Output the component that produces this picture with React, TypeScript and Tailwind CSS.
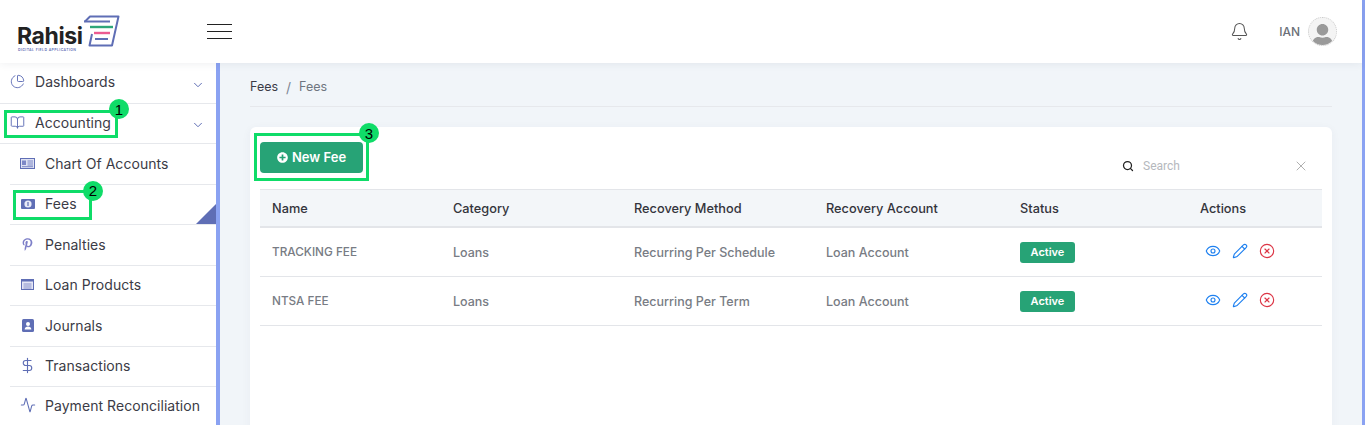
import React from 'react';
import {
  Activity,
  Bell,
  BookOpen,
  ChevronDown,
  DollarSign,
  Eye,
  PieChart,
  Pencil,
  Search,
  X,
  XCircle,
} from 'lucide-react';
import { FaPinterestP, FaPlusCircle, FaUser } from 'react-icons/fa';

const NewsIcon = () => (
  <svg width="15" height="11" viewBox="0 0 15 11" className="text-[#5f6eb5]">
    <rect x="0.5" y="0.5" width="14" height="10" fill="#dfe2f3" stroke="currentColor" />
    <rect x="2" y="2.5" width="4" height="4.5" fill="#7d88c6" />
    <path d="M7.5 3h5.5M7.5 5h5.5M7.5 7h5.5M2 8.7h11" stroke="#7d88c6" />
  </svg>
);

const MoneyIcon = () => (
  <svg width="14" height="10" viewBox="0 0 14 10" className="text-[#5f6eb5]">
    <rect width="14" height="10" rx="1" fill="currentColor" />
    <ellipse cx="7" cy="5" rx="3.6" ry="3.6" fill="#e8ebf7" />
    <rect x="6.4" y="3" width="1.2" height="4" fill="currentColor" />
  </svg>
);

const ListIcon = () => (
  <svg width="13" height="11" viewBox="0 0 13 11" className="text-[#5f6eb5]">
    <rect x="0.5" y="0.5" width="12" height="10" fill="#e4e6f5" stroke="currentColor" />
    <rect width="13" height="2.5" fill="currentColor" />
    <path d="M2.5 5h8M2.5 7h8M2.5 9h8" stroke="#7d88c6" strokeWidth="0.9" />
  </svg>
);

const ContactIcon = () => (
  <svg width="12" height="13" viewBox="0 0 12 13" className="text-[#5f6eb5]">
    <rect width="12" height="13" rx="1.5" fill="currentColor" />
    <circle cx="6" cy="5" r="2" fill="#fff" />
    <path d="M2.6 10.4c.3-2 1.7-2.9 3.4-2.9s3.1.9 3.4 2.9z" fill="#fff" />
  </svg>
);

const Logo = () => (
  <div className="relative h-[36px] w-[104px]">
    <span className="absolute left-0 top-[9px] text-[23px] font-bold leading-[26px] tracking-[-0.4px] text-[#222]">Rahisi</span>
    <span className="absolute left-[1px] top-[34px] whitespace-nowrap text-[3.5px] font-semibold leading-[4px] tracking-[0.4px] text-[#5f6eb5]">DIGITAL FIELD APPLICATION</span>
    <svg width="38" height="34" viewBox="0 0 38 34" className="absolute left-[66px] top-0" fill="none">
      <path d="M2 7.5 7 2.5H35.5L29 31.5H6.5L9 20" stroke="#5f6eb5" strokeWidth="2" strokeLinejoin="round" />
      <path d="M1 7.5H27" stroke="#5f6eb5" strokeWidth="2" />
      <path d="M7 13H30" stroke="#2ea67a" strokeWidth="2.4" />
      <path d="M11 19H27" stroke="#ec5b92" strokeWidth="2.4" />
      <path d="M12 25H25" stroke="#5f6eb5" strokeWidth="2" />
    </svg>
  </div>
);

const subItems = [
  { label: 'Chart Of Accounts', icon: <NewsIcon /> },
  { label: 'Fees', icon: <MoneyIcon /> },
  { label: 'Penalties', icon: <FaPinterestP size={13} className="text-[#7d7fc8]" /> },
  { label: 'Loan Products', icon: <ListIcon /> },
  { label: 'Journals', icon: <ContactIcon /> },
  { label: 'Transactions', icon: <DollarSign size={17} strokeWidth={1.6} className="text-[#5f6eb5]" /> },
  { label: 'Payment Reconciliation', icon: <Activity size={16} strokeWidth={1.6} className="text-[#5f6eb5]" /> },
];

const fees = [
  { name: 'TRACKING FEE', method: 'Recurring Per Schedule' },
  { name: 'NTSA FEE', method: 'Recurring Per Term' },
];

const grid = 'grid grid-cols-[181px_181px_192px_194px_180px_1fr] pl-3';

const Badge = ({ n, className }: { n: number; className: string }) => (
  <span className={`absolute flex h-5 w-5 items-center justify-center rounded-full bg-[#0fdc68] font-['Liberation_Sans',sans-serif] text-[15px] leading-none text-black ${className}`}>
    {n}
  </span>
);

export default function App() {
  return (
    <div className="flex h-[425px] overflow-hidden bg-[#f1f5f9] font-['Inter',sans-serif] text-[#3a3a4a]">
      <div className="flex min-w-0 flex-1 flex-col">
        <header className="z-10 flex h-[63px] shrink-0 items-center justify-between bg-white pl-[17px] pr-[25px] shadow-[0_1px_8px_rgba(50,60,90,0.08)]">
          <div className="flex items-center">
            <div>
              <Logo />
            </div>
            <div className="ml-[86px] flex w-[25px] flex-col gap-[6px]">
              <span className="h-px bg-[#222]" />
              <span className="h-px bg-[#222]" />
              <span className="h-px bg-[#222]" />
            </div>
          </div>
          <div className="flex items-center">
            <Bell size={19} strokeWidth={1.3} className="text-[#555]" />
            <span className="ml-[30px] text-[12px] font-medium text-[#6b6f78]">IAN</span>
            <span className="ml-2 flex h-[29px] w-[29px] items-end justify-center overflow-hidden rounded-full border border-dotted border-[#ccc] bg-[#f4f4f4]">
              <FaUser size={23} className="translate-y-[2px] text-[#9a9a9a]" />
            </span>
          </div>
        </header>

        <div className="flex min-h-0 flex-1">
          <aside className="w-[220px] shrink-0 border-r-4 border-[#8aa2f2] bg-white text-[14px] tracking-[0.05px] text-[#3b3b46]">
            <div className="flex h-[41px] items-center border-b border-[#e6e8ec] pb-[3px] pl-[10px] pr-[11px]">
              <PieChart size={15} strokeWidth={1.5} className="text-[#5f6eb5]" />
              <span className="ml-[10px] flex-1">Dashboards</span>
              <ChevronDown size={14} strokeWidth={1.7} className="mt-[6px] text-[#5f6eb5]" />
            </div>
            <div className="relative flex h-[40px] items-center border-b border-[#e6e8ec] pb-[2px] pl-[10px] pr-[11px]">
              <BookOpen size={15} strokeWidth={1.5} className="text-[#5f6eb5]" />
              <span className="ml-[10px] flex-1">Accounting</span>
              <ChevronDown size={14} strokeWidth={1.7} className="mt-[5px] text-[#5f6eb5]" />
              <span className="absolute left-[4px] top-[6px] h-[28px] w-[114px] border-[3px] border-[#0fdc68]" />
              <Badge n={1} className="left-[109px] top-[-5px]" />
            </div>
            <ul className="ml-[10px]">
              {subItems.map((item) => (
                <li key={item.label} className="relative flex h-[40.5px] items-center border-b border-[#e6e8ec] pb-[1px] last:border-b-0 last:pb-[4px]">
                  <span className="flex w-[35px] justify-center pr-[5px] pl-[5px]">{item.icon}</span>
                  <span className="whitespace-nowrap">{item.label}</span>
                  {item.label === 'Fees' && (
                    <>
                      <span className="absolute bottom-0 right-0 h-0 w-0 border-b-[20px] border-l-[20px] border-b-[#5f6eb5] border-l-transparent" />
                      <span className="absolute left-[3px] top-[5px] h-[30px] w-[79px] border-[3px] border-[#0fdc68]" />
                      <Badge n={2} className="left-[73px] top-[-4px]" />
                    </>
                  )}
                </li>
              ))}
            </ul>
          </aside>

          <main className="min-w-0 flex-1 px-[30px]">
            <nav className="flex h-[44px] items-center border-b border-[#e6e8ec] pt-[5px] text-[12.5px]">
              <span className="text-[#3b3b46]">Fees</span>
              <span className="mx-[8px] text-[14px] text-[#7d8796]">/</span>
              <span className="text-[#6f7680]">Fees</span>
            </nav>
            <section className="mt-[20px] rounded-t-md bg-white px-[10px] pt-[15px] shadow-[0_2px_10px_rgba(50,60,90,0.05)]">
              <div className="flex h-[47px] items-start justify-between">
                <div className="relative">
                  <button className="flex h-[31px] w-[103px] items-center justify-center gap-1 rounded-[4px] bg-[#27a376] text-[13px] font-semibold text-white">
                    <FaPlusCircle size={11} />
                    New Fee
                  </button>
                  <span className="absolute left-[-6px] top-[-9px] h-[48px] w-[115px] border-[3px] border-[#0fdc68]" />
                  <Badge n={3} className="left-[99px] top-[-19px]" />
                </div>
                <div className="mr-[13px] mt-[15px] flex w-[187px] items-center text-[12px]">
                  <Search size={12} strokeWidth={2.5} className="text-[#222]" />
                  <span className="ml-[9px] flex-1 font-['Roboto',sans-serif] text-[#b5b8bd]">Search</span>
                  <X size={16} strokeWidth={1} className="text-[#888]" />
                </div>
              </div>

              <div className={`${grid} h-[39px] items-center border-y-2 border-y-[#e3e5e9] border-t-[1px] bg-[#f3f6f9] pt-[2px] text-[12.75px] font-medium text-[#33343c]`}>
                <span>Name</span>
                <span>Category</span>
                <span>Recovery Method</span>
                <span>Recovery Account</span>
                <span>Status</span>
                <span>Actions</span>
              </div>
              {fees.map((fee) => (
                <div key={fee.name} className={`${grid} h-[49px] items-center border-b border-[#e3e5e9] text-[12.5px] font-medium text-[#787c84]`}>
                  <span className="pt-[2px] text-[11.75px]">{fee.name}</span>
                  <span className="pt-[2px]">Loans</span>
                  <span className="pt-[2px]">{fee.method}</span>
                  <span className="pt-[2px]">Loan Account</span>
                  <span>
                    <span className="inline-flex h-[21px] w-[55px] items-center justify-center rounded-[3px] bg-[#27a376] text-[11px] font-semibold text-white">Active</span>
                  </span>
                  <span className="ml-[5px] flex -translate-y-[1px] items-center gap-[11px]">
                    <Eye size={16} strokeWidth={1.7} className="text-[#1e80f0]" />
                    <Pencil size={16} strokeWidth={1.7} className="text-[#1e80f0]" />
                    <XCircle size={16} strokeWidth={1.7} className="text-[#dc3545]" />
                  </span>
                </div>
              ))}
              <div className="h-[120px]" />
            </section>
          </main>
        </div>
      </div>
      <div className="w-[3px] shrink-0 bg-[#8aa2f2]" />
    </div>
  );
}
